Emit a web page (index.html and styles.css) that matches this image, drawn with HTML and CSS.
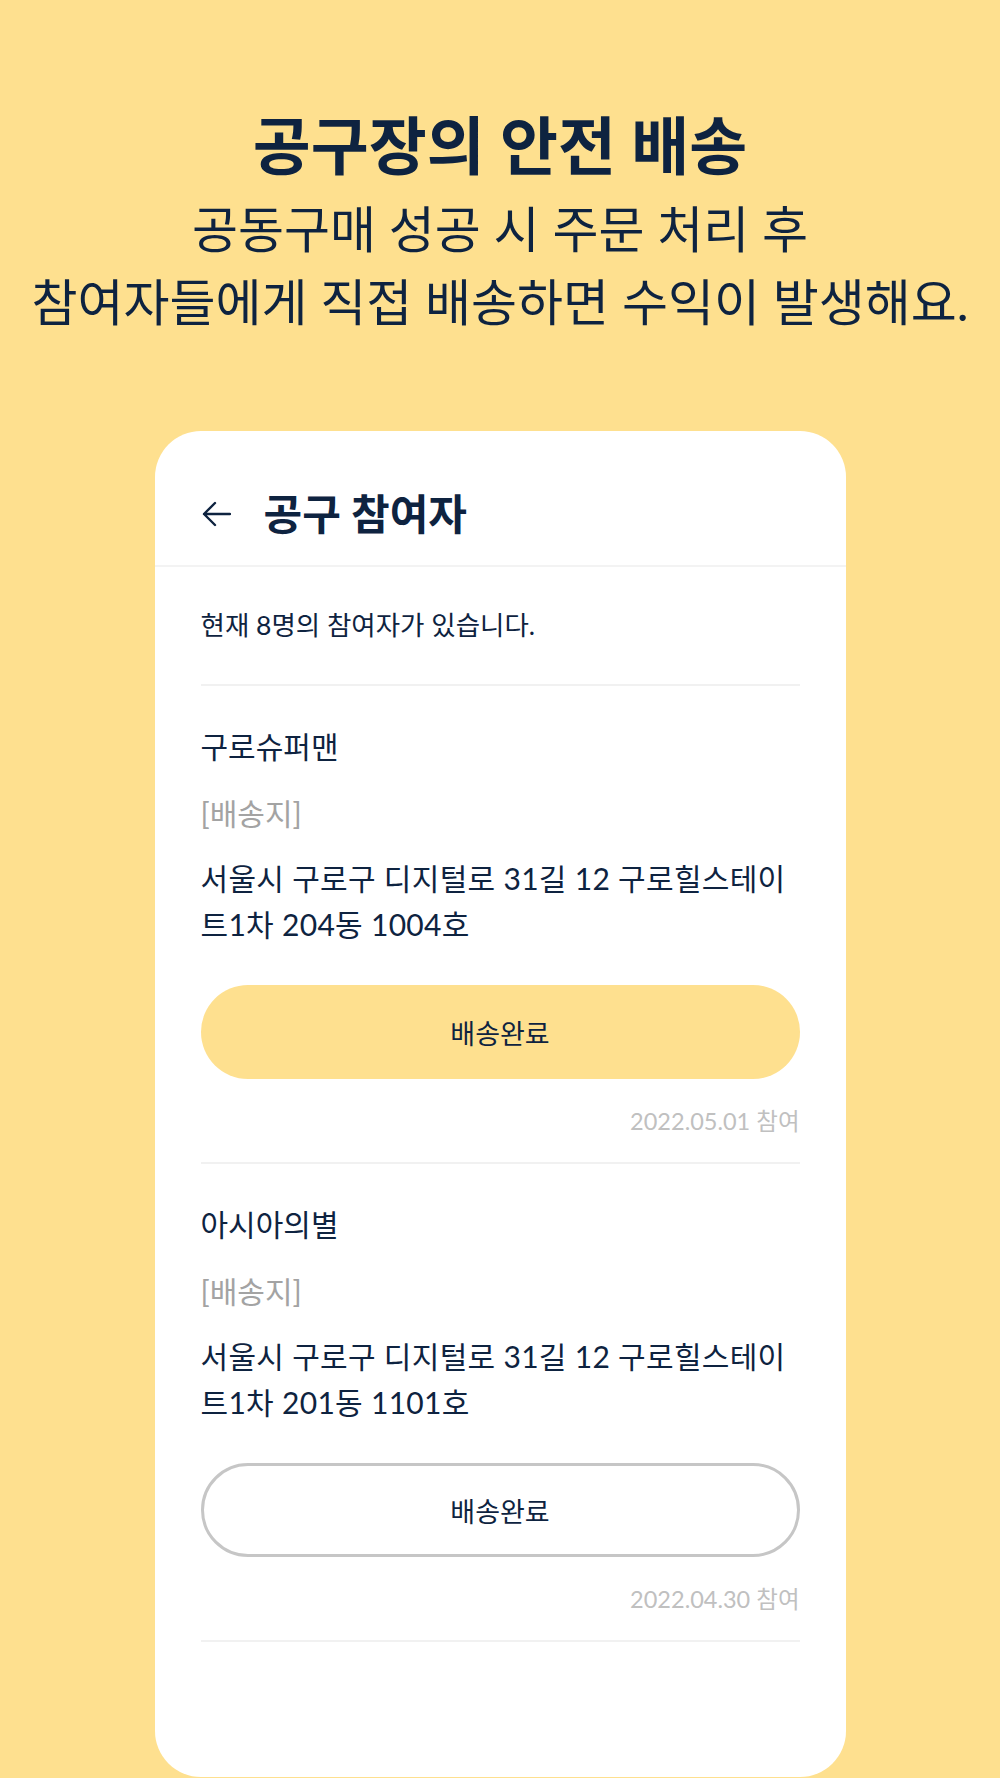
FILE: index.html
```html
<!DOCTYPE html>
<html lang="ko">

<head>
    <meta charset="utf-8">
    <title>공구장의 안전 배송</title>
    <link rel="stylesheet" href="styles.css">
</head>

<body>
    <div class="intro">
        <h1>공구장의 안전 배송</h1>
        <p>공동구매 성공 시 주문 처리 후<br>참여자들에게 직접 배송하면 수익이 발생해요.</p>
    </div>

    <div class="phone">
        <div class="topbar">
            <svg class="back" width="30" height="26" viewBox="0 0 30 26">
                <path d="M29 13H3M14 2L3 13L14 24" fill="none" stroke="#0e2340" stroke-width="2.4" stroke-linecap="round" stroke-linejoin="round" />
            </svg>
            <h2>공구 참여자</h2>
        </div>

        <div class="content">
            <p class="count">현재 8명의 참여자가 있습니다.</p>

            <div class="member">
                <div class="name">구로슈퍼맨</div>
                <div class="label">[배송지]</div>
                <div class="address">서울시 구로구 디지털로 31길 12 구로힐스테이트1차 204동 1004호</div>
                <button class="done active">배송완료</button>
                <div class="date">2022.05.01 참여</div>
            </div>

            <div class="member">
                <div class="name">아시아의별</div>
                <div class="label">[배송지]</div>
                <div class="address">서울시 구로구 디지털로 31길 12 구로힐스테이트1차 201동 1101호</div>
                <button class="done">배송완료</button>
                <div class="date">2022.04.30 참여</div>
            </div>
        </div>
    </div>
</body>

</html>
```

FILE: styles.css
```css
html,
body {
    margin: 0;
    height: 1778px;
    overflow: hidden;
}

body {
    background: #fee08f;
    color: #0e2340;
    font-family: Lato, "Noto Sans CJK KR", sans-serif;
}

.intro {
    padding-top: 105px;
    text-align: center;
}

.intro h1 {
    margin: 0;
    font-size: 63px;
    line-height: 80px;
    font-weight: 700;
}

.intro p {
    margin: 8px 0 0;
    font-size: 50px;
    line-height: 73px;
}

.phone {
    width: 691px;
    height: 1346px;
    margin: 92px auto 0;
    background: #fff;
    border-radius: 46px;
    overflow: hidden;
}

.topbar {
    display: flex;
    align-items: center;
    height: 136px;
    box-sizing: border-box;
    padding: 32px 46px 0;
    border-bottom: 2px solid #f3f3f3;
}

.topbar .back {
    display: block;
}

.topbar h2 {
    margin: 0 0 0 33px;
    font-size: 42px;
    line-height: 50px;
    font-weight: 700;
}

.content {
    padding: 0 46px;
}

.count {
    margin: 0;
    padding: 38px 0 39px;
    font-size: 26.5px;
    line-height: 40px;
    border-bottom: 2px solid #f1f1f1;
}

.member {
    padding: 40px 0 26px;
    border-bottom: 2px solid #f1f1f1;
}

.member .name {
    font-size: 30px;
    line-height: 40px;
}

.member .label {
    margin-top: 27px;
    font-size: 30px;
    line-height: 40px;
    color: #a3a3a3;
}

.member .address {
    margin-top: 22px;
    font-size: 30px;
    line-height: 46px;
    letter-spacing: 0.3px;
    word-break: break-all;
}

.done {
    display: block;
    width: 100%;
    height: 94px;
    margin-top: 38px;
    box-sizing: border-box;
    border: 3px solid #c6c6c6;
    border-radius: 47px;
    background: #fff;
    color: #0e2340;
    font-family: inherit;
    font-size: 27px;
}

.done.active {
    border: none;
    background: #fee08f;
}

.date {
    margin-top: 27px;
    font-size: 23.5px;
    line-height: 30px;
    text-align: right;
    color: #c0c0c0;
}
```
